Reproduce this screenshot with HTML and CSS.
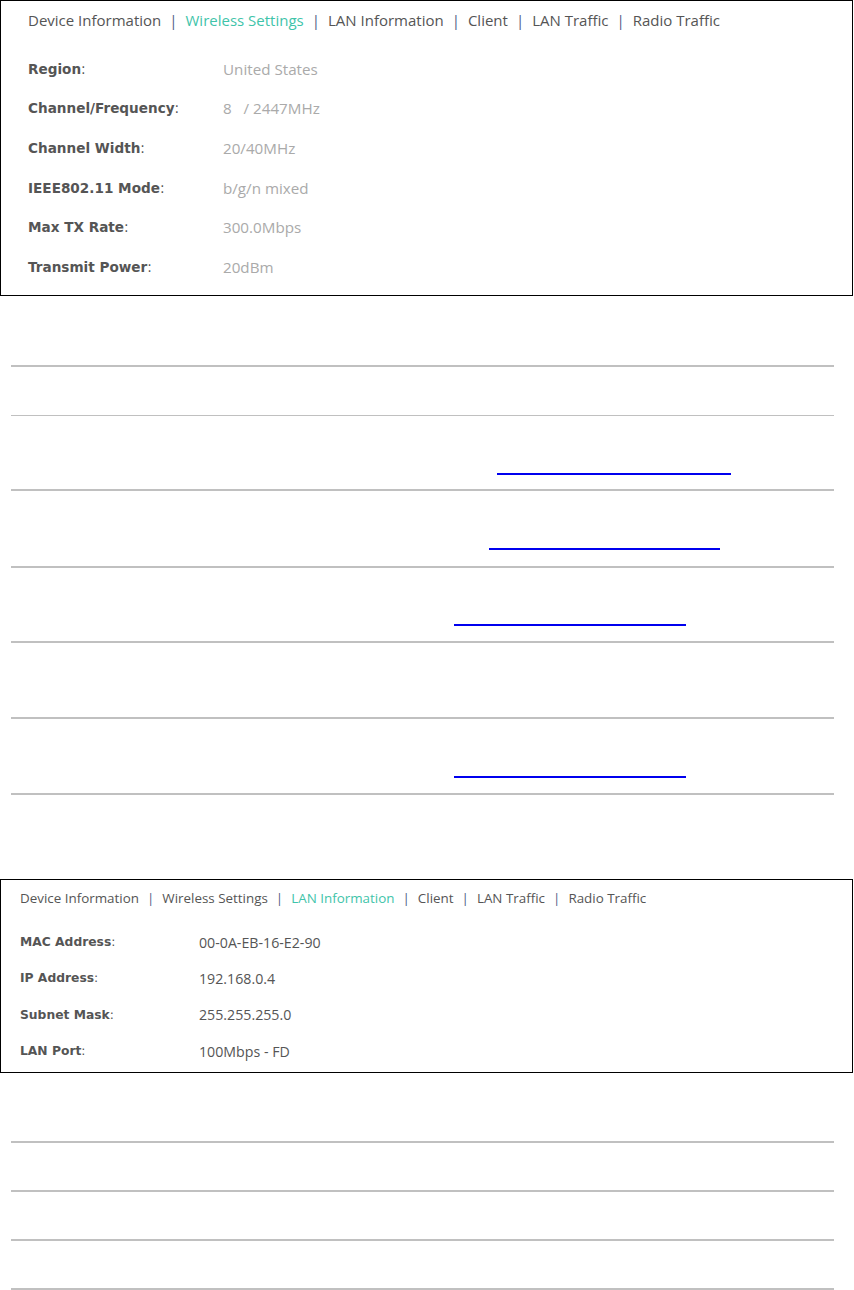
FILE: index.html
```html
<!DOCTYPE html>
<html lang="en">
<head>
    <meta charset="UTF-8">
    <title>Status</title>
    <link rel="stylesheet" href="styles.css">
</head>
<body>
    <div class="shot shot-wireless">
        <div class="tabs">
            <span class="tab">Device Information</span><span class="sep">|</span>
            <span class="tab active">Wireless Settings</span><span class="sep">|</span>
            <span class="tab">LAN Information</span><span class="sep">|</span>
            <span class="tab">Client</span><span class="sep">|</span>
            <span class="tab">LAN Traffic</span><span class="sep">|</span>
            <span class="tab">Radio Traffic</span>
        </div>
        <div class="fields">
            <div class="label"><b>Region</b>:</div><div class="value">United States</div>
            <div class="label"><b>Channel/Frequency</b>:</div><div class="value">8 &nbsp; / 2447MHz</div>
            <div class="label"><b>Channel Width</b>:</div><div class="value">20/40MHz</div>
            <div class="label"><b>IEEE802.11 Mode</b>:</div><div class="value">b/g/n mixed</div>
            <div class="label"><b>Max TX Rate</b>:</div><div class="value">300.0Mbps</div>
            <div class="label"><b>Transmit Power</b>:</div><div class="value">20dBm</div>
        </div>
    </div>

    <div class="rules rules-wireless">
        <div class="row row-head"></div>
        <div class="row row-tall r2"><a class="link l1"></a></div>
        <div class="row row-tall r3"><a class="link l2"></a></div>
        <div class="row row-tall r4"><a class="link l3"></a></div>
        <div class="row row-tall r5"></div>
        <div class="row row-tall r6"><a class="link l3"></a></div>
    </div>

    <div class="shot shot-lan">
        <div class="tabs">
            <span class="tab">Device Information</span><span class="sep">|</span>
            <span class="tab">Wireless Settings</span><span class="sep">|</span>
            <span class="tab active">LAN Information</span><span class="sep">|</span>
            <span class="tab">Client</span><span class="sep">|</span>
            <span class="tab">LAN Traffic</span><span class="sep">|</span>
            <span class="tab">Radio Traffic</span>
        </div>
        <div class="fields">
            <div class="label"><b>MAC Address</b>:</div><div class="value">00-0A-EB-16-E2-90</div>
            <div class="label"><b>IP Address</b>:</div><div class="value">192.168.0.4</div>
            <div class="label"><b>Subnet Mask</b>:</div><div class="value">255.255.255.0</div>
            <div class="label"><b>LAN Port</b>:</div><div class="value">100Mbps - FD</div>
        </div>
    </div>

    <div class="rules rules-lan">
        <div class="row"></div>
        <div class="row"></div>
        <div class="row"></div>
    </div>
</body>
</html>
```

FILE: styles.css
```css
body {
    margin: 0;
    width: 854px;
    background-color: #fff;
    font-family: "Open Sans", "Liberation Sans", sans-serif;
}

.shot {
    border: 1px solid #000;
    box-sizing: border-box;
    width: 853px;
}

.tabs {
    display: flex;
    align-items: center;
    color: #555;
    white-space: nowrap;
}

.tab.active {
    color: #3fc4aa;
}

.sep {
    color: #4f5a86;
}

.fields {
    display: grid;
}

.label {
    color: #555;
    font-family: "DejaVu Sans", Verdana, sans-serif;
}

.label b {
    font-weight: bold;
}

/* wireless settings shot */
.shot-wireless {
    height: 296px;
    padding-left: 27px;
}

.shot-wireless .tabs {
    height: 38px;
    font-size: 15px;
}

.shot-wireless .sep {
    padding: 0 8px;
}

.shot-wireless .fields {
    margin-top: 10px;
    grid-template-columns: 195px 1fr;
    grid-auto-rows: 39.6px;
    align-items: center;
}

.shot-wireless .label {
    font-size: 13.6px;
}

.shot-wireless .value {
    color: #aaa;
    font-size: 15.2px;
}

/* lan information shot */
.shot-lan {
    height: 194px;
    margin-top: 84px;
    padding-left: 19px;
}

.shot-lan .tabs {
    height: 36px;
    font-size: 13.4px;
}

.shot-lan .sep {
    padding: 0 8px;
}

.shot-lan .fields {
    margin-top: 8px;
    grid-template-columns: 179px 1fr;
    grid-auto-rows: 36.3px;
    align-items: center;
}

.shot-lan .label {
    font-size: 12.3px;
}

.shot-lan .value {
    color: #555;
    font-size: 14.2px;
}

/* ruled tables */
.rules {
    margin-left: 11px;
    width: 823px;
    border-top: 2px solid #c0c0c0;
}

.rules-wireless {
    margin-top: 69px;
}

.rules-lan {
    margin-top: 68px;
}

.row {
    height: 47px;
    border-bottom: 2px solid #c0c0c0;
    display: flex;
    align-items: flex-end;
}

.row-head {
    height: 48px;
    border-bottom-width: 1px;
}

.row-tall {
    height: 74px;
}

.row.r2 { height: 73px; }
.row.r3 { height: 75px; }
.row.r4 { height: 73px; }

.link {
    display: block;
    height: 0;
    border-bottom: 2px solid #0000ee;
}

.r2 .link { margin-bottom: 14px; }
.r3 .link { margin-bottom: 16px; }
.r4 .link { margin-bottom: 15px; }
.r6 .link { margin-bottom: 15px; }

.l1 { margin-left: 486px; width: 234px; }
.l2 { margin-left: 478px; width: 231px; }
.l3 { margin-left: 443px; width: 232px; }
```
